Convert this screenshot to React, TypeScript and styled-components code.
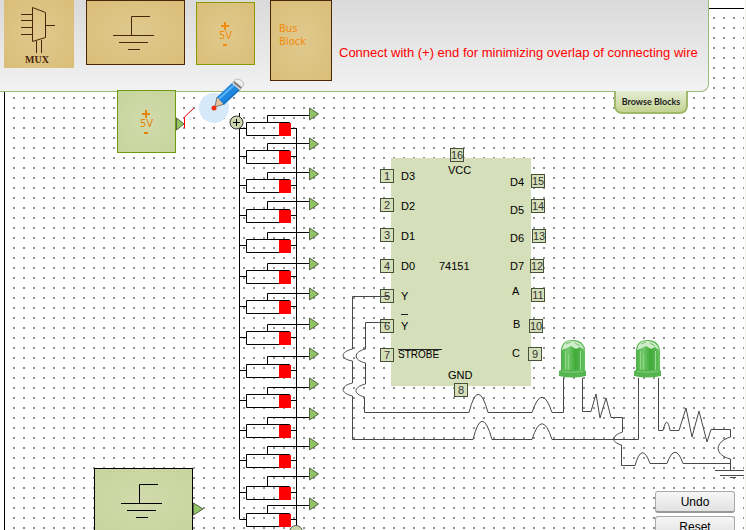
import React from "react";
import styled, { createGlobalStyle } from "styled-components";

const GlobalStyle = createGlobalStyle`
  *, *::before, *::after { box-sizing: border-box; }
  body { margin: 0; background: #fff; font-family: "Liberation Sans", Arial, sans-serif; overflow: hidden; }
`;

const Page = styled.main`
  position: relative;
  min-height: 100vh;
  padding: 8px 1px 0 4px;
  display: flex;
  overflow: hidden;
  border-right: 1px solid #f1f3e4;
`;

/* Dotted work area that carries every block and wire. */
const Board = styled.section`
  position: relative;
  flex: 1;
  border: solid #000;
  border-width: 1px 0 0 1px;
  background: conic-gradient(from 90deg at 8px 8px, #8f8f8f 90deg, transparent 0) 0 0 / 10px 10px;
`;

const Palette = styled.header`
  position: absolute;
  z-index: 2;
  top: 0;
  left: 0;
  right: 36px;
  height: 92px;
  padding-left: 4px;
  display: flex;
  align-items: flex-start;
  border: solid #9bb972;
  border-width: 0 1px 1px 0;
  border-bottom-right-radius: 8px;
  background: linear-gradient(#dadada, #f2f2f2);
`;

const Card = styled.button<{ $w: number; $h: number; $edge?: string; $after: number; $top?: number }>`
  flex: none;
  width: ${(p) => p.$w}px;
  height: ${(p) => p.$h}px;
  margin: ${(p) => p.$top ?? 0}px ${(p) => p.$after}px 0 0;
  padding: 0;
  display: flex;
  flex-direction: column;
  align-items: center;
  justify-content: center;
  border: ${(p) => (p.$edge ? `1px solid ${p.$edge}` : "0")};
  background: radial-gradient(#e0c98e, #d9be78);
  color: #f28a0c;
`;

const MuxCard = styled(Card)`
  justify-content: flex-end;
  padding: 0 4px 2px 0;
  color: #4a2508;
  font: bold 10px/12px "Liberation Serif", serif;
`;

const BusCard = styled(Card)`
  align-items: flex-start;
  padding: 0 8px 12px;
  font: 10px/13px "DejaVu Sans", Verdana, sans-serif;
  text-align: left;
`;

const Message = styled.p`
  margin: 43px 0 0;
  color: #f00;
  font-size: 13px;
  line-height: 20px;
  white-space: nowrap;
`;

const BrowseTab = styled.button`
  position: absolute;
  top: 91px;
  right: 20px;
  width: 74px;
  height: 23px;
  padding: 0;
  border: 2px solid #a0b86c;
  border-top: 0;
  border-radius: 0 0 8px 8px;
  background: linear-gradient(#e5ecd4, #c3d391);
  color: #222;
  font: bold 9px Lato, sans-serif;
`;

const Drawing = styled.svg`
  position: absolute;
  top: -9px;
  left: -5px;
  fill: none;
`;

const Block = styled.div<{ $x: number; $y: number; $w: number; $h: number; $edge: string }>`
  position: absolute;
  z-index: 3;
  left: ${(p) => p.$x}px;
  top: ${(p) => p.$y}px;
  width: ${(p) => p.$w}px;
  height: ${(p) => p.$h}px;
  display: flex;
  flex-direction: column;
  align-items: center;
  justify-content: center;
  border: 1px solid ${(p) => p.$edge};
  background: radial-gradient(#d2daab, #c7d49d);
  color: #e0860c;
`;

const Supply = styled.span`
  display: flex;
  flex-direction: column;
  align-items: center;
  padding-top: 2px;
  font: 10px/12px "DejaVu Sans", Verdana, sans-serif;
`;

const Polarity = styled.svg`
  display: block;
`;

const Ground = styled.svg`
  margin-right: 4px;
`;

const Chip = styled.div`
  position: absolute;
  left: 386px;
  top: 149px;
  width: 140px;
  height: 228px;
  background: #d5dfba;
`;

const Pin = styled.span<{ $x: number; $y: number }>`
  position: absolute;
  left: ${(p) => p.$x}px;
  top: ${(p) => p.$y}px;
  width: 14px;
  height: 14px;
  display: flex;
  justify-content: center;
  border: 1px solid #47513a;
  background: #d5dfba;
  color: #333;
  font-size: 11px;
  line-height: 13px;
`;

const Label = styled.span<{ $x: number; $y: number }>`
  position: absolute;
  left: ${(p) => p.$x}px;
  top: ${(p) => p.$y}px;
  color: #000;
  font-size: 11px;
  line-height: 12px;
  white-space: nowrap;
`;

const Inverted = styled(Label)`
  border-top: 1px solid #222;
  padding-right: 3px;
  font-size: 10px;
  line-height: 10px;
`;

const Bar = styled.span`
  position: absolute;
  left: 396px;
  top: 305px;
  width: 7px;
  border-top: 1px solid #222;
`;

const Actions = styled.nav`
  position: absolute;
  z-index: 3;
  top: 482px;
  right: 9px;
  width: 80px;
  display: grid;
  gap: 3px;
`;

const Action = styled.button`
  height: 22px;
  padding: 0;
  border: 1px solid #aaa;
  border-bottom: 2px solid #999;
  border-radius: 3px;
  background: linear-gradient(#f6f6f6, #e2e2e2);
  color: #000;
  font: 12px "Liberation Sans", Arial, sans-serif;
`;

const PencilIcon = styled.svg`
  position: absolute;
  z-index: 4;
  top: 78px;
  left: 195px;
`;

const GroundIcon = ({ color }: { color: string }) => (
  <Ground width="42" height="36" viewBox="0 0 42 36" fill="none" stroke={color}>
    <path d="M18.5 20V1.5H37M0 20.5H41M6 27.5H35M15 34.5H27" />
  </Ground>
);

const MuxIcon = () => (
  <svg width="36" height="49" viewBox="0 0 36 49" fill="none" stroke="#4a2508">
    <path d="M13.5 2.5L26.5 7.5V32.5L13.5 36.5ZM2 9.5H13M2 15.5H13M2 22.5H13M2 29.5H13M27 20.5H36M17.5 36V48M22.5 35V48" />
  </svg>
);

const resistorRows = [
  [122, 115], [150, 143], [179, 172], [209, 201], [239, 232], [270, 263], [300, 293],
  [331, 324], [364, 356], [394, 387], [424, 417], [454, 446], [486, 476], [513, 505],
];

const pins: [string, number, number][] = [
  ["1", 380, 169], ["2", 380, 198], ["3", 380, 228], ["4", 380, 259], ["5", 380, 289],
  ["6", 380, 319], ["7", 380, 348], ["8", 454, 383], ["9", 528, 347], ["10", 529, 319],
  ["11", 531, 288], ["12", 530, 259], ["13", 532, 229], ["14", 531, 199], ["15", 531, 174], ["16", 450, 148],
];

const labels: [string, number, number][] = [
  ["D3", 401, 170], ["D2", 401, 200], ["D1", 401, 230], ["D0", 401, 260], ["Y", 401, 290],
  ["VCC", 448, 164], ["74151", 439, 260], ["GND", 448, 369],
  ["D4", 510, 176], ["D5", 510, 204], ["D6", 510, 232], ["D7", 510, 260],
  ["A", 512, 285], ["B", 513, 318], ["C", 512, 347], ["Y", 401, 320],
];

const Led = ({ x }: { x: number }) => (
  <g transform={`translate(${x} 340)`}>
    <path d="M3 31V12Q3 0 14 0Q27 0 27 12V31Z" fill="url(#led)" />
    <path d="M4 10Q5 1 14 1Q24 1 26 10L22 7L18 9L13 6L9 8Z" fill="#cfeccb" />
    <path d="M8 4L13 2M17 3L22 6" stroke="#76bf70" />
    <path d="M7.5 11V30M10.5 14V30" stroke="#8fd688" />
    <path d="M22.5 11V30" stroke="#9cdc95" />
    <path d="M1 31Q3 29 14 30Q26 29 28 31V36Q14 39 1 36Z" fill="#55b64f" />
    <path d="M4 31.5Q14 33 25 31.5" stroke="#86cd7f" />
  </g>
);

const Wiring = () => (
  <Drawing width="760" height="545" viewBox="0 0 760 545" aria-hidden="true">
    <defs>
      <linearGradient id="led">
        <stop offset="0" stopColor="#4bae46" />
        <stop offset="0.3" stopColor="#74ca6c" />
        <stop offset="0.6" stopColor="#3faa38" />
        <stop offset="1" stopColor="#69c262" />
      </linearGradient>
    </defs>
    <path d="M239.5 113V519.5M296.5 128V530" stroke="#000" />
    {resistorRows.map(([y, wire], i) => (
      <g key={y}>
        <path
          d={`M240 ${y + 6.5}H246M291 ${y + 6.5}H296M246.5 ${y + 0.5}H289.5V${y + 13.5}H246.5ZM267.5 ${y}V${wire + 0.5}H309`}
          stroke="#000"
        />
        <path d={`M279 ${y + 1}h12v13h-12Z`} fill="#f00" />
        <path d={`M309.5 ${108 + i * 30}V${120 + i * 30}L318.5 ${114 + i * 30}Z`} fill="#91c462" stroke="#54634a" />
      </g>
    ))}
    <circle cx="236.5" cy="122.5" r="6.5" fill="#cbd5ab" stroke="#333" />
    <path d="M233 122.5H240M236.5 119V126" stroke="#000" />
    <circle cx="296" cy="532" r="6.5" fill="#cbd5ab" stroke="#555" />
    <path d="M176.5 118V130L184 124Z" fill="#91c462" stroke="#54634a" />
    <path d="M184.5 128V117L194 108" stroke="#f00" />
    <path d="M193.5 503V515L203 509Z" fill="#91c462" stroke="#54634a" />
    <Led x={558} />
    <Led x={633} />
  </Drawing>
);

const Wires = () => (
  <Drawing width="760" height="545" viewBox="0 0 760 545" aria-hidden="true">
    <g stroke="#484848">
      <path d="M390 296.5H352.5V349C340 352 340 359 352.5 361V383C340 386 340 393 352.5 396V439.5H473Q482 403 492 439.5H532Q542 408 552 439.5H638.5V378" />
      <path d="M390 322.5H365.5V349C353 352 353 360 365.5 363V384C353 387 353 394 364.5 397V412.5H469Q478 376 488 412.5H532Q542 382 552 412.5H563.5V378" />
      <path d="M582.5 378V411.5H591L596 394L600 418L606 398L611 417.5H622.5V432C611 436 611 442 621.5 445V465.5H635Q642 441 650 463.5H667Q675 441 683 463.5H730" />
      <path d="M658.5 378V430.5H663Q667 414 670 430.5H679L686 408L692 437L699 411L707 442L711 429.5H730.5V437C714 442 714 455 730.5 459V470M715 470.5H744M720 475.5H744M730 477.5H736" />
    </g>
  </Drawing>
);

const Pencil = () => (
  <PencilIcon width="52" height="56" viewBox="0 0 52 56" aria-hidden="true">
    <circle cx="19" cy="30" r="15" fill="#d6e9fb" />
    <path d="M20 29L22 19L29 26Z" fill="#e8c49a" stroke="#777" />
    <path d="M22 19L37 5L45 12L29 27Z" fill="#1e86de" />
    <path d="M24 21L39 7" stroke="#5cb4f4" strokeWidth="2" />
    <path d="M28 26L44 12" stroke="#17609f" />
    <path d="M37 5L41 1Q47 1 49 6L45 12Z" fill="#efefef" stroke="#bbb" />
    <path d="M39 4L46 10" stroke="#777" strokeWidth="2" />
    <circle cx="19" cy="30" r="2.5" fill="#f0320c" />
  </PencilIcon>
);

const SupplyMark = () => (
  <Supply>
    <Polarity width="8" height="8" viewBox="0 0 8 8" role="img" aria-label="plus">
      <path d="M0 3h3V0h2v3h3v2h-3v3h-2v-3h-3Z" fill="currentColor" />
    </Polarity>
    <span>5V</span>
    <Polarity width="7" height="6" viewBox="0 0 7 6" role="img" aria-label="minus">
      <path d="M1 2h4v2h-4Z" fill="currentColor" />
    </Polarity>
  </Supply>
);

export default function App() {
  return (
    <Page>
      <GlobalStyle />
      <Palette>
        <MuxCard $w={70} $h={68} $after={12}><MuxIcon />MUX</MuxCard>
        <Card $w={99} $h={65} $edge="#4a2508" $after={11} aria-label="Ground"><GroundIcon color="#4a2508" /></Card>
        <Card $w={59} $h={63} $top={2} $edge="#8c9a00" $after={15}><SupplyMark /></Card>
        <BusCard $w={62} $h={81} $edge="#4a2508" $after={7}>Bus<br />Block</BusCard>
        <Message>Connect with (+) end for minimizing overlap of connecting wire</Message>
        <BrowseTab>Browse Blocks</BrowseTab>
      </Palette>
      <Board>
        <Wiring />
        <Chip />
        {pins.map(([n, x, y]) => <Pin key={n} $x={x - 5} $y={y - 9}>{n}</Pin>)}
        {labels.map(([t, x, y]) => <Label key={`${t}${y}`} $x={x - 5} $y={y - 9}>{t}</Label>)}
        <Bar />
        <Inverted $x={393} $y={340}>STROBE</Inverted>
        <Wires />
        <Block $x={89} $y={459} $w={99} $h={65} $edge="#000"><GroundIcon color="#000" /></Block>
        <Actions><Action>Undo</Action><Action>Reset</Action></Actions>
      </Board>
      <Block $x={117} $y={90} $w={59} $h={63} $edge="#6c9b12"><SupplyMark /></Block>
      <Pencil />
    </Page>
  );
}
